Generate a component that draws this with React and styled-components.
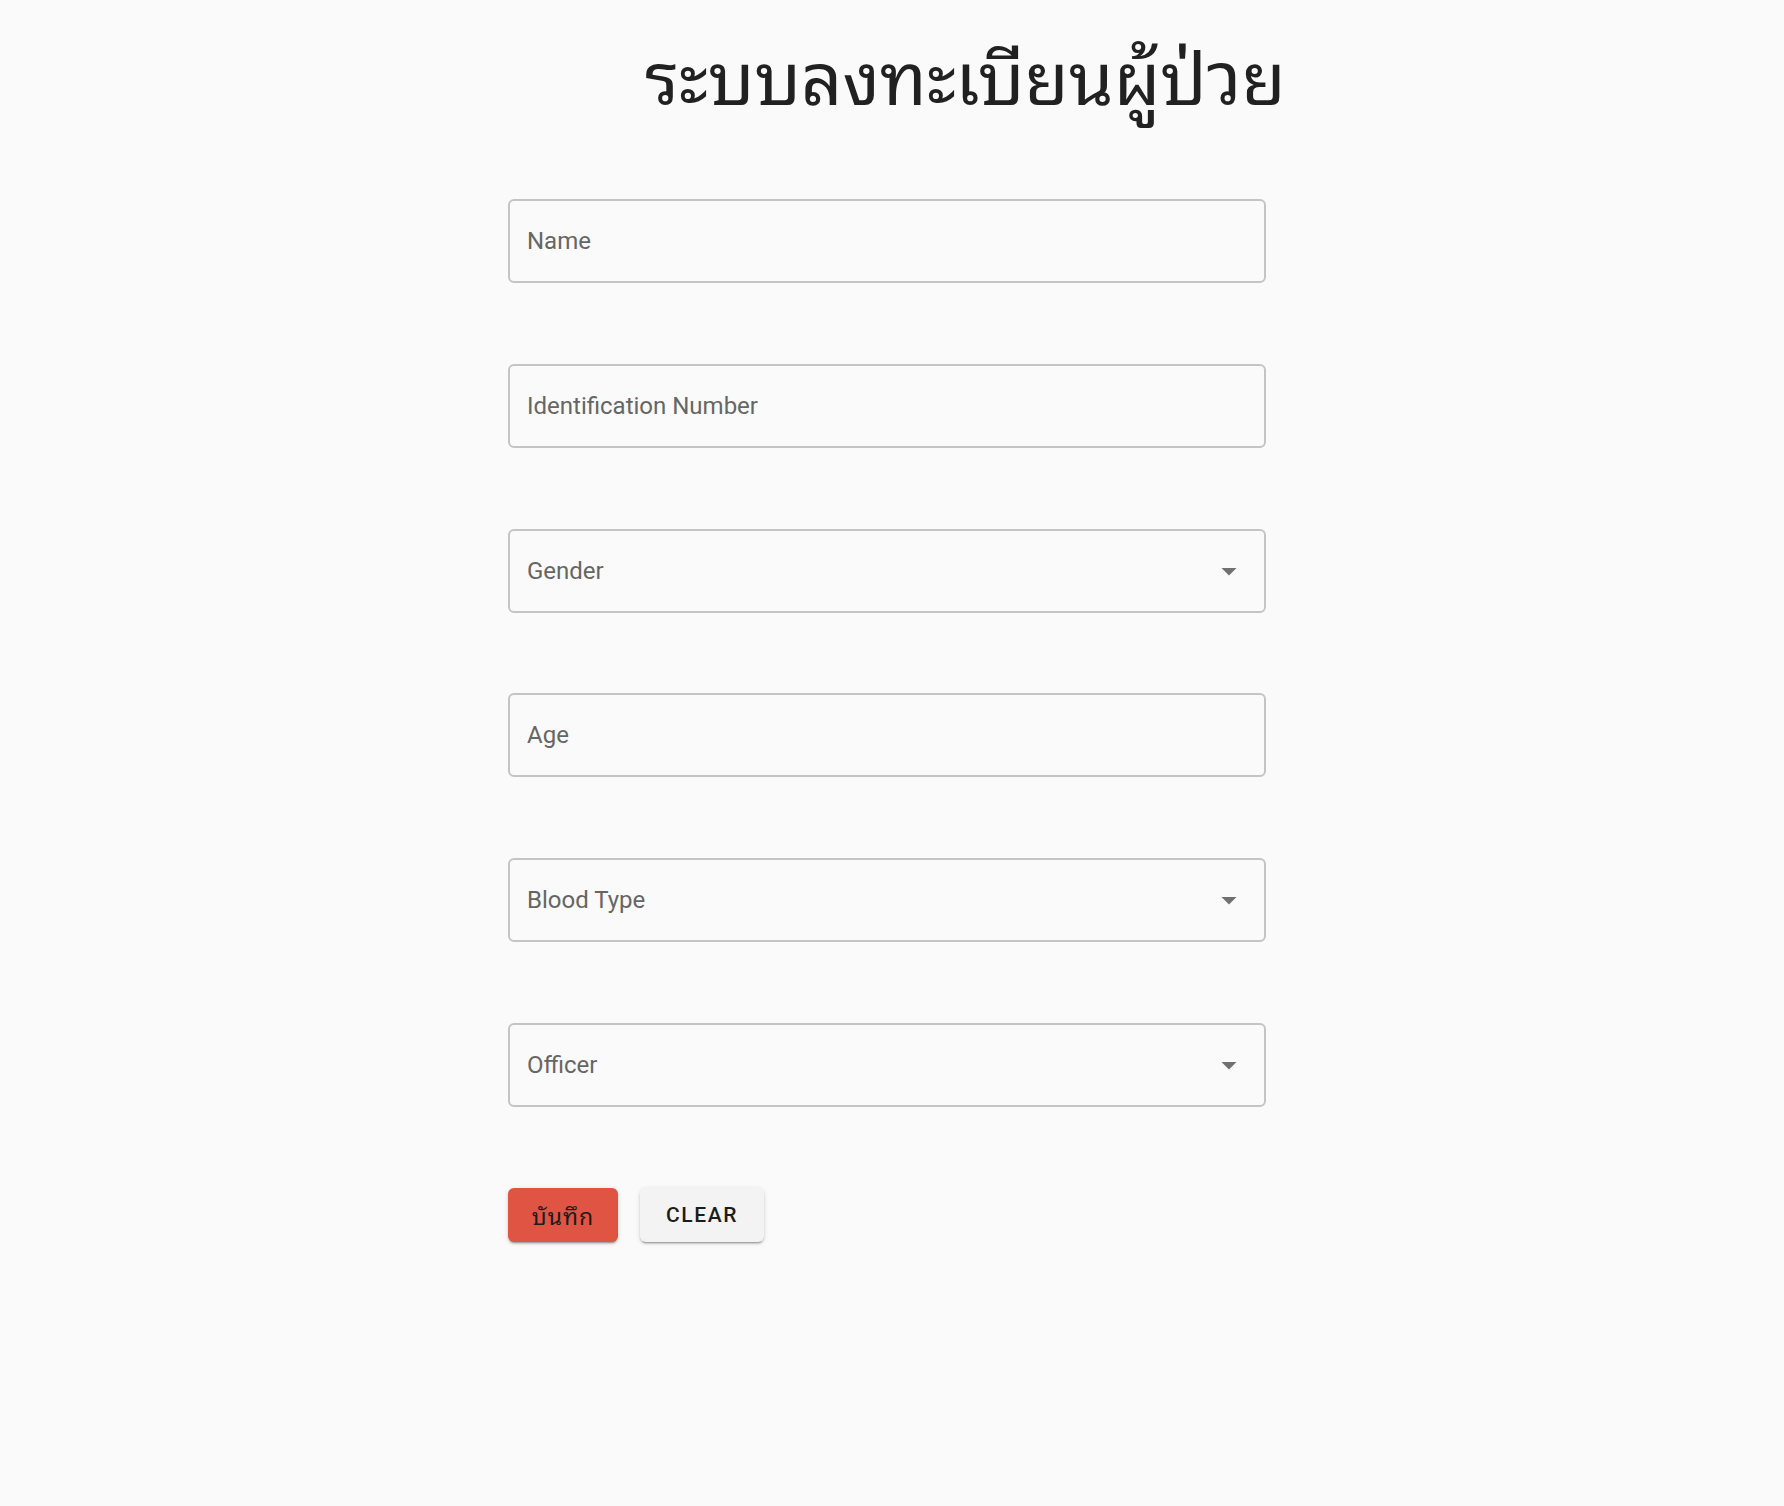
import React from "react";
import styled, { createGlobalStyle } from "styled-components";

const GlobalStyle = createGlobalStyle`
  body {
    margin: 0;
    background-color: #fafafa;
    font-family: Roboto, "Noto Sans", sans-serif;
  }
`;

const Page = styled.div`
  min-height: 1506px;
  padding-top: 23px;
  box-sizing: border-box;
`;

const Title = styled.h1`
  margin: 0;
  padding-left: 645px;
  font-family: "Noto Sans Thai Looped", "Noto Sans", "Noto Sans Thai", sans-serif;
  font-weight: 400;
  font-size: 72px;
  line-height: 100px;
  color: #212121;
`;

const Form = styled.form`
  display: flex;
  flex-direction: column;
  gap: 80.8px;
  width: 758px;
  margin-top: 76px;
  margin-left: 508px;
`;

const Field = styled.div`
  position: relative;
  display: flex;
  align-items: center;
  height: 84px;
  box-sizing: border-box;
  padding: 0 17px;
  border: 2px solid #c4c4c4;
  border-radius: 6px;
  font-size: 24px;
  color: #666666;
  cursor: ${props => (props.select ? "pointer" : "text")};
`;

const Arrow = styled.svg`
  position: absolute;
  right: 17px;
  top: 50%;
  width: 36px;
  height: 36px;
  margin-top: -18px;
  fill: #707070;
`;

const Actions = styled.div`
  display: flex;
  gap: 22px;
`;

const Button = styled.button`
  display: flex;
  align-items: center;
  justify-content: center;
  height: 54px;
  min-width: ${props => (props.primary ? "110px" : "124px")};
  padding: 0 20px;
  border: none;
  border-radius: 6px;
  background-color: ${props => (props.primary ? "#e05444" : "#f3f3f3")};
  color: #1c1c1c;
  font-family: ${props => (props.primary ? '"Noto Sans Thai Looped", "Noto Serif Thai", serif' : 'Roboto, sans-serif')};
  font-size: ${props => (props.primary ? "23px" : "21px")};
  font-weight: ${props => (props.primary ? 400 : 500)};
  letter-spacing: ${props => (props.primary ? "1px" : "1.6px")};
  box-shadow: 0px 3px 1px -2px rgba(0, 0, 0, 0.2), 0px 2px 2px 0px rgba(0, 0, 0, 0.14), 0px 1px 5px 0px rgba(0, 0, 0, 0.12);
  cursor: pointer;
`;

const fields = [
  { label: "Name" },
  { label: "Identification Number" },
  { label: "Gender", select: true },
  { label: "Age" },
  { label: "Blood Type", select: true },
  { label: "Officer", select: true },
];

export default function App() {
  return (
    <Page>
      <GlobalStyle />
      <Title>ระบบลงทะเบียนผู้ป่วย</Title>
      <Form onSubmit={e => e.preventDefault()}>
        {fields.map(f => (
          <Field key={f.label} select={f.select}>
            {f.label}
            {f.select && (
              <Arrow viewBox="0 0 24 24">
                <path d="M7 10l5 5 5-5z" />
              </Arrow>
            )}
          </Field>
        ))}
        <Actions>
          <Button primary type="submit">บันทึก</Button>
          <Button type="button">CLEAR</Button>
        </Actions>
      </Form>
    </Page>
  );
}
